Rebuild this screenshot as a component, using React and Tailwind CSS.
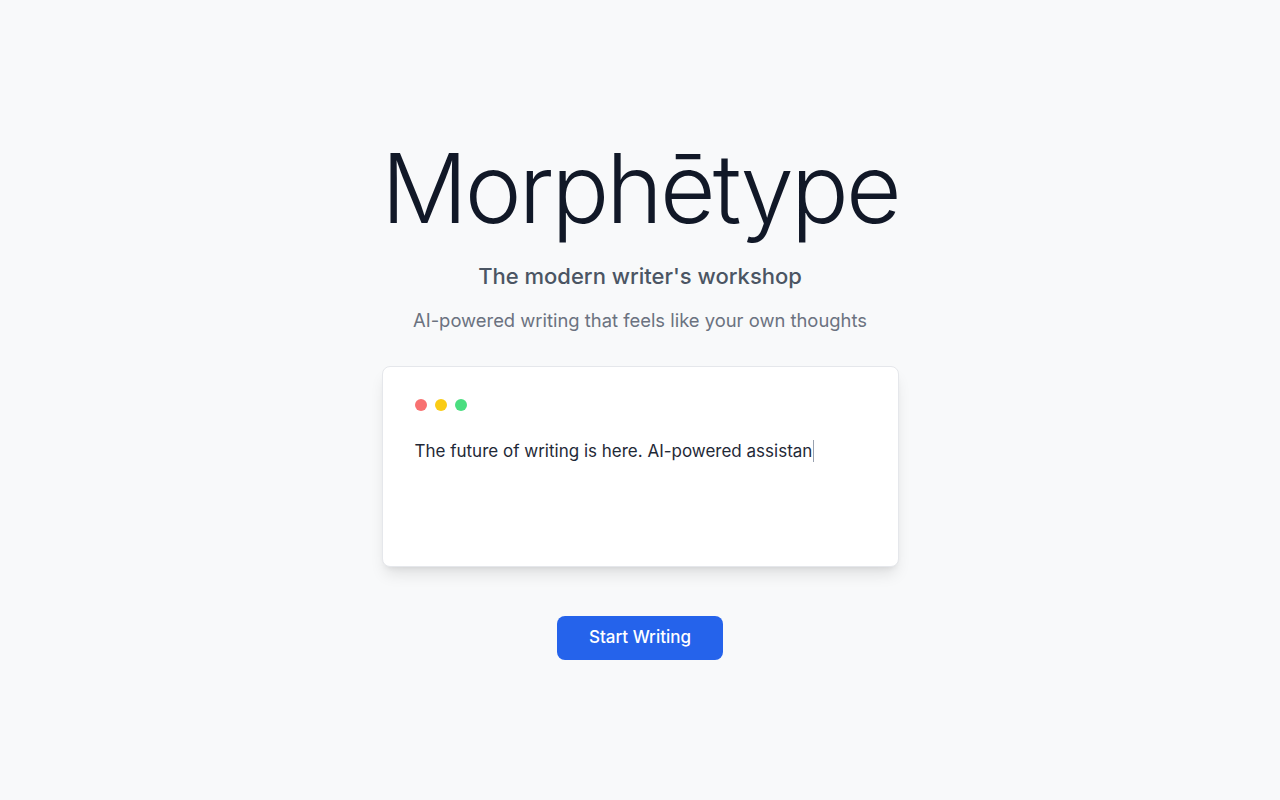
import React from "react";

export default function App() {
  return (
    <div
      className="min-h-screen w-full bg-[#f8f9fa] flex flex-col items-center justify-center"
      style={{ fontFamily: "Inter, 'Liberation Sans', sans-serif" }}
    >
      <h1 className="text-8xl font-light text-[#111827] leading-none tracking-[-0.03em]">Morphētype</h1>
      <p className="mt-[26px] text-[22px] leading-7 font-medium text-[#4b5563]">The modern writer's workshop</p>
      <p className="mt-4 text-[18.4px] leading-7 text-[#6b7280]">AI-powered writing that feels like your own thoughts</p>
      <div className="mt-8 w-[517px] h-[201px] bg-white rounded-lg border border-[#e5e7eb] shadow-lg px-8 pt-8">
        <div className="flex gap-2">
          <span className="w-3 h-3 rounded-full bg-[#f87171]"></span>
          <span className="w-3 h-3 rounded-full bg-[#facc15]"></span>
          <span className="w-3 h-3 rounded-full bg-[#4ade80]"></span>
        </div>
        <p className="mt-[26px] text-[17px] leading-7 text-[#1f2937] flex items-center">
          The future of writing is here. AI-powered assistan
          <span className="inline-block w-px h-[22px] bg-gray-400 ml-px"></span>
        </p>
      </div>
      <button className="mt-[49px] bg-[#2563eb] text-white text-[17px] font-medium rounded-lg px-8 h-11">
        Start Writing
      </button>
    </div>
  );
}
